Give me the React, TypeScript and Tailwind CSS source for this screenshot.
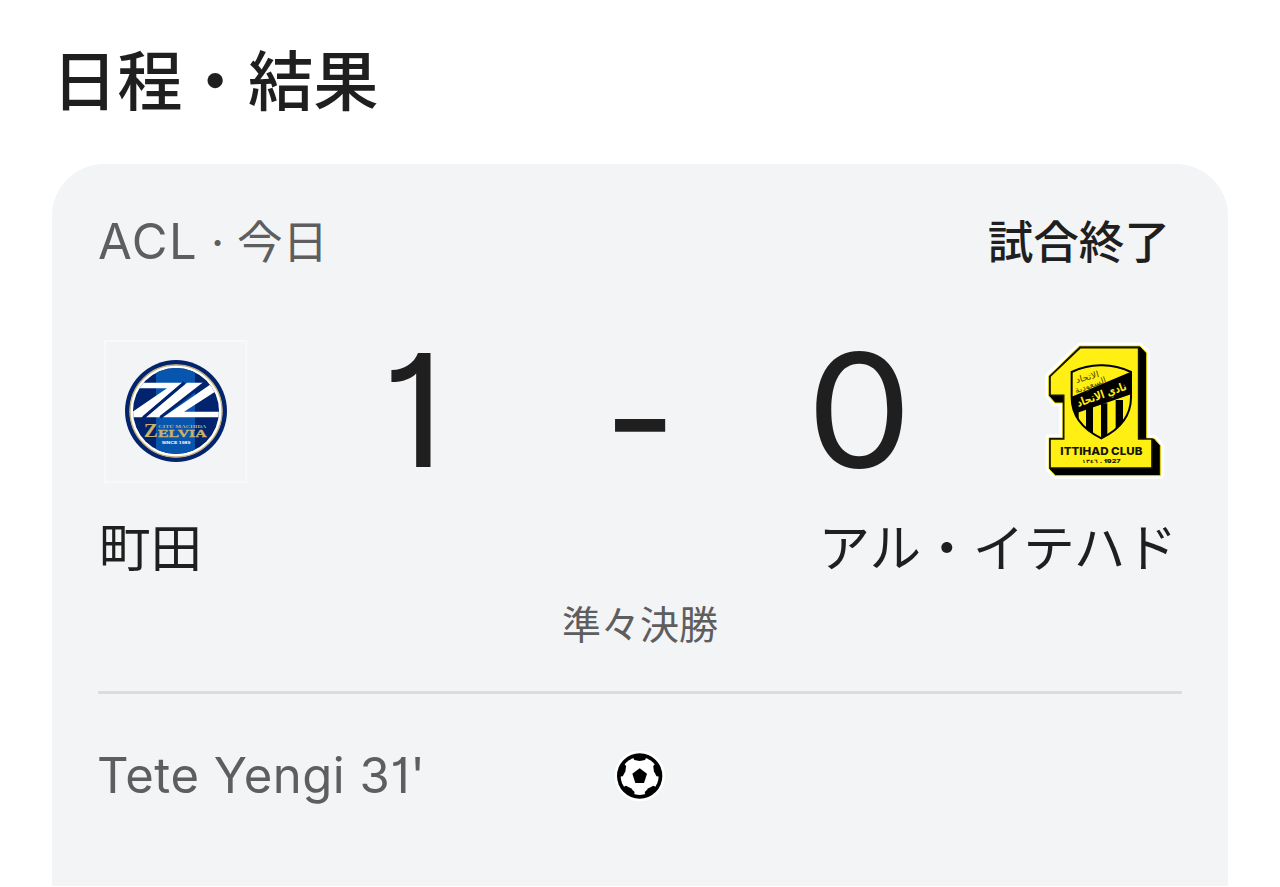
const ZelviaBadge = () => (
  <svg
    viewBox="0 0 480 480"
    className="-ml-[3px] h-40 w-40 shrink-0"
    aria-label="町田"
  >
    <defs>
      <clipPath id="zelvia-disc">
        <circle cx="243" cy="243" r="129" />
      </clipPath>
    </defs>
    <rect
      x="30"
      y="33"
      width="424"
      height="424"
      fill="none"
      stroke="#f8f9fa"
      strokeWidth="6"
    />
    <circle cx="243" cy="243" r="153" fill="#02236d" />
    <circle cx="243" cy="243" r="139" fill="#fff" />
    <circle
      cx="243"
      cy="243"
      r="138"
      fill="none"
      stroke="#c5b07a"
      strokeWidth="4"
    />
    <g clipPath="url(#zelvia-disc)">
      <rect x="110" y="110" width="270" height="270" fill="#02236d" />
      <rect x="183" y="110" width="117" height="270" fill="#0755ad" />
      <path d="M100 158H262L140 262H100V254L216 175H100Z" fill="#fff" />
      <path d="M276 158H326L194 262H152Z" fill="#fff" />
      <path d="M268 158L146 262" stroke="#02236d" strokeWidth="9" />
      <path d="M330 158L196 262" stroke="#02236d" strokeWidth="9" />
      <path d="M204 262L345 164L372 178L267 245H390V262Z" fill="#fff" />
    </g>
    <g fill="#c9b16d" fontFamily="Liberation Serif, serif" fontWeight="700">
      <text
        x="146"
        y="321"
        fontSize="58"
        textLength="42"
        lengthAdjust="spacingAndGlyphs"
      >
        Z
      </text>
      <text
        x="189"
        y="321"
        fontSize="34"
        stroke="#c9b16d"
        strokeWidth="1"
        textLength="146"
        lengthAdjust="spacingAndGlyphs"
      >
        ELVIA
      </text>
      <text
        x="190"
        y="293"
        fontSize="15"
        textLength="144"
        lengthAdjust="spacingAndGlyphs"
      >
        CITÚ MACHIDA
      </text>
    </g>
    <text
      x="200"
      y="342"
      fill="#fff"
      fontSize="13"
      fontFamily="Liberation Sans, sans-serif"
      fontWeight="700"
      textLength="86"
      lengthAdjust="spacingAndGlyphs"
    >
      SINCE 1989
    </text>
  </svg>
);

const IttihadBadge = () => (
  <svg
    viewBox="0 0 450 480"
    className="ml-1 h-40 w-[150px] shrink-0"
    aria-label="アル・イテハド"
  >
    <defs>
      <clipPath id="ittihad-shield">
        <path d="M125 126Q170 105 214 106Q258 105 303 126V202Q303 282 214 325Q125 282 125 202Z" />
      </clipPath>
    </defs>
    <path
      d="M149 48H330L350 69V325H372L391 346V437H76L57 417V323H98V219H75L56 197V138Z"
      fill="#fff"
      stroke="#fff"
      strokeWidth="20"
      strokeLinejoin="round"
    />
    <path
      d="M149 48H330L350 69V325H372L391 346V437H76L57 417V323H98V219H75L56 197V138Z"
      fill="#000"
      stroke="#e6d800"
      strokeWidth="3"
      strokeLinejoin="round"
    />
    <path
      d="M151 53H326V327H366V414H60V327H101V196H60V139Z"
      fill="#ffef13"
      stroke="#151400"
      strokeWidth="5"
    />
    <g clipPath="url(#ittihad-shield)">
      <rect x="120" y="100" width="190" height="230" fill="#ffef13" />
      <path
        d="M120 235H146V330H120ZM168 230H189V330H168ZM213 220H232V330H213ZM257 210H279V330H257Z"
        fill="#000"
      />
      <path d="M120 202L310 122V190L120 256Z" fill="#000" />
    </g>
    <path
      d="M125 126Q170 105 214 106Q258 105 303 126V202Q303 282 214 325Q125 282 125 202Z"
      fill="none"
      stroke="#000"
      strokeWidth="6"
    />
    <g fontFamily="DejaVu Sans, sans-serif">
      <text
        x="216"
        y="205"
        fill="#ffef13"
        fontSize="34"
        fontWeight="700"
        textAnchor="middle"
        transform="rotate(-20 216 198)"
        textLength="156"
        lengthAdjust="spacingAndGlyphs"
      >
        نادي الاتحاد
      </text>
      <g fill="#4d4800" fontSize="27" textAnchor="middle">
        <text
          x="174"
          y="150"
          transform="rotate(-15 174 150)"
          textLength="72"
          lengthAdjust="spacingAndGlyphs"
        >
          الاتحاد
        </text>
        <text
          x="184"
          y="174"
          transform="rotate(-20 184 174)"
          textLength="98"
          lengthAdjust="spacingAndGlyphs"
        >
          السعودية
        </text>
      </g>
    </g>
    <g fill="#151400" fontFamily="Inter, sans-serif" fontWeight="800">
      <text
        x="91"
        y="375"
        fontSize="33"
        textLength="246"
        lengthAdjust="spacingAndGlyphs"
      >
        ITTIHAD CLUB
      </text>
      <text
        x="155"
        y="399"
        fontSize="16"
        textLength="117"
        lengthAdjust="spacingAndGlyphs"
      >
        ١٣٤٦ . 1927
      </text>
    </g>
  </svg>
);

const PATCH_ANGLES = [0, 72, 144, 216, 288];

const GoalIcon = () => (
  <svg viewBox="0 0 240 210" className="h-[70px] w-20" aria-label="ゴール">
    <circle cx="119" cy="108" r="76" fill="#fff" />
    <circle cx="119" cy="108" r="68" fill="#000" />
    <circle cx="119" cy="108" r="57" fill="#fff" />
    {PATCH_ANGLES.map((angle) => (
      <path
        key={angle}
        d="M97 48L103 60L119 63L135 60L141 48L119 42Z"
        transform={`rotate(${angle} 119 108)`}
      />
    ))}
    <path d="M119 85L141 101L132 129H106L97 101Z" fill="#000" />
  </svg>
);

const App = () => {
  return (
    <main className="h-[886px] w-full overflow-hidden bg-white px-[52px] font-['Inter','Noto_Sans_CJK_JP',sans-serif] text-[#1f1f1f] [font-feature-settings:'cv01']">
      <h1 className="flex h-[164px] items-center text-[65.3px] leading-none font-medium whitespace-nowrap">
        日程・結果
      </h1>

      <section className="h-[722px] rounded-t-[52px] bg-[#f3f4f6] px-[46px]">
        <div className="flex h-[166px] items-center justify-between pr-[12px] pb-2 text-[45.6px] leading-none">
          <span className="flex items-baseline pb-1 whitespace-pre text-[#5e5e5e]">
            <span className="text-[49px] tracking-[1.5px]">ACL</span>
            <span> · 今日</span>
          </span>
          <span className="font-medium whitespace-nowrap">試合終了</span>
        </div>

        <div className="grid h-40 grid-cols-[156px_314px_144px_314px_156px] grid-rows-[160px] items-center text-[157px] leading-none">
          <ZelviaBadge />
          <span className="pl-1 text-center">1</span>
          <span className="pt-[14px] text-center">-</span>
          <span className="scale-x-[1.07] pr-[18px] text-center">0</span>
          <IttihadBadge />
        </div>

        <div className="flex h-[110px] items-center justify-between pt-2 pr-[5px] pl-px text-[51.6px] leading-none whitespace-nowrap">
          <span>町田</span>
          <span>アル・イテハド</span>
        </div>

        <div className="flex h-[91px] justify-center text-[39px] leading-[50px] text-[#5e5e5e]">
          準々決勝
        </div>

        <div className="grid h-[168px] grid-cols-[502px_80px_1fr] items-center border-t-[3px] border-[#dadce0] pb-1 text-[#5e5e5e]">
          <span className="-ml-px pt-0.5 text-[49px] leading-none tracking-[0.5px] whitespace-nowrap">
            Tete Yengi 31&apos;
          </span>
          <GoalIcon />
        </div>
      </section>
    </main>
  );
};

export default App;
